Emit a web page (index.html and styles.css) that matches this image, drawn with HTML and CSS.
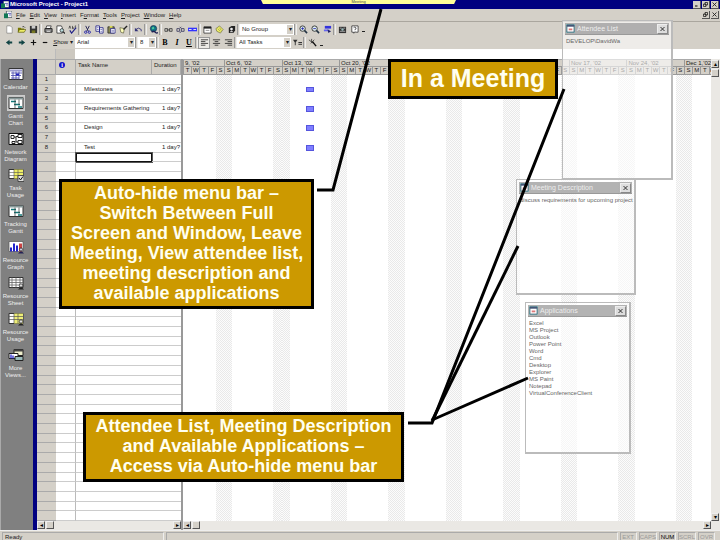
FILE: index.html
```
<!DOCTYPE html>
<html lang="en">
<head>
  <meta charset="UTF-8">
  <meta name="viewport" content="width=device-width, initial-scale=1.0">
  <title>Microsoft Project - Project1</title>
  <link rel="stylesheet" href="styles.css">
</head>
<body>
  <svg class="defs" aria-hidden="true">
    <symbol id="i-new" viewBox="0 0 10 10"><path d="M2 1h4l2 2v6H2z" fill="#fff" stroke="#555" stroke-width=".5"/></symbol>
    <symbol id="i-open" viewBox="0 0 10 10"><path d="M1 3h3l1 1h3v4H1z" fill="#770"/><path d="M1 8l2-3h7L8 8z" fill="#ee6" stroke="#440" stroke-width=".6"/><path d="M6 2q2-1 3 1" fill="none" stroke="#222" stroke-width=".8"/></symbol>
    <symbol id="i-save" viewBox="0 0 10 10"><path d="M1 1h8v8H1z" fill="#333"/><path d="M3 1h4v3H3z" fill="#ccc"/><path d="M3 6h4v3H3z" fill="#772"/></symbol>
    <symbol id="i-print" viewBox="0 0 10 10"><path d="M3 1h5L7 4H2z" fill="#fff" stroke="#222" stroke-width=".8"/><path d="M1 4h8v4H1z" fill="#888" stroke="#111" stroke-width=".9"/><path d="M3 7h4" stroke="#eee"/></symbol>
    <symbol id="i-preview" viewBox="0 0 10 10"><path d="M1 1h5l1 2v6H1z" fill="#fff" stroke="#222" stroke-width=".8"/><circle cx="6.500" cy="6" r="2" fill="#bdd" stroke="#222" stroke-width=".8"/><path d="M8 7.500l2 2" stroke="#222" stroke-width="1.200"/></symbol>
    <symbol id="i-spell" viewBox="0 0 10 10"><path d="M1 4l1-3 1 3M5 1v3h1V3H5M9 1H8v3h1" fill="none" stroke="#222" stroke-width=".7"/><path d="M2 6l2 3 5-6" fill="none" stroke="#228" stroke-width="1.300"/></symbol>
    <symbol id="i-cut" viewBox="0 0 10 10"><path d="M3 1l3 6M7 1L4 7" stroke="#225" stroke-width="1"/><circle cx="3" cy="8" r="1.300" fill="none" stroke="#22a"/><circle cx="7" cy="8" r="1.300" fill="none" stroke="#22a"/></symbol>
    <symbol id="i-copy" viewBox="0 0 10 10"><path d="M1 1h4v6H1zM5 3h4v6H5z" fill="#fff" stroke="#228" stroke-width=".9"/><path d="M2 3h2M2 5h2M6 5h2M6 7h2" stroke="#228" stroke-width=".6"/></symbol>
    <symbol id="i-paste" viewBox="0 0 10 10"><path d="M1 2h7v7H1z" fill="#885" stroke="#222" stroke-width=".8"/><path d="M3 1h3v2H3z" fill="#dd5"/><path d="M4 4h5v5H4z" fill="#fff" stroke="#228" stroke-width=".8"/><path d="M5 6h3M5 7.500h3" stroke="#228" stroke-width=".5"/></symbol>
    <symbol id="i-painter" viewBox="0 0 10 10"><path d="M1 3l5 1-1 5-3-1z" fill="#ffb" stroke="#553" stroke-width=".7"/><path d="M5 5l4-4" stroke="#222" stroke-width="1.500"/></symbol>
    <symbol id="i-undo" viewBox="0 0 10 10"><path d="M2 5q3-3 6 0v2" fill="none" stroke="#337" stroke-width="1"/><path d="M1 3v4h4z" fill="#337"/></symbol>
    <symbol id="i-globe" viewBox="0 0 10 10"><circle cx="5" cy="4" r="3.500" fill="#178" stroke="#124" stroke-width=".7"/><path d="M3 3l2-1 1 2-2 1z" fill="#5c9"/><path d="M3 8q2-2 4 0t3 0" fill="none" stroke="#225" stroke-width="1.500"/></symbol>
    <symbol id="i-link" viewBox="0 0 10 10"><path d="M1 4h3v3H1zM6 4h3v3H6zM3 5.500h4" fill="none" stroke="#444" stroke-width="1"/></symbol>
    <symbol id="i-unlink" viewBox="0 0 10 10"><path d="M1 4h3v3H1zM6 4h3v3H6zM4 2l2 2M6 7l-2 2M6 2L5 3" fill="none" stroke="#446" stroke-width="1"/></symbol>
    <symbol id="i-split" viewBox="0 0 10 10"><path d="M0 3h10v4H0z" fill="#33f"/><path d="M1 5h3M6 5h3" stroke="#dde" stroke-width="1.200"/></symbol>
    <symbol id="i-info" viewBox="0 0 10 10"><path d="M1 2h8v7H1z" fill="#fff" stroke="#222" stroke-width=".8"/><path d="M1 2h8v2H1z" fill="#222"/><path d="M3 6h4" stroke="#777" stroke-width=".8"/></symbol>
    <symbol id="i-note" viewBox="0 0 10 10"><path d="M1 4l4-3 4 4-3 4-4-2z" fill="#ee6" stroke="#553" stroke-width=".6"/><path d="M3 4l3 3M5 3l2 3" stroke="#774" stroke-width=".6"/></symbol>
    <symbol id="i-assign" viewBox="0 0 10 10"><path d="M2 3l3-2h4v5L7 9H2z" fill="#222"/><circle cx="5" cy="4.500" r="1.500" fill="#eee"/><path d="M3 8q2-3 4 0z" fill="#ccc"/></symbol>
    <symbol id="i-zoomin" viewBox="0 0 10 10"><circle cx="4" cy="4" r="3" fill="#dee" stroke="#222" stroke-width=".9"/><path d="M2.500 4h3M4 2.500v3" stroke="#22a" stroke-width=".9"/><path d="M6 6l3 3" stroke="#234" stroke-width="1.700"/></symbol>
    <symbol id="i-zoomout" viewBox="0 0 10 10"><circle cx="4" cy="4" r="3" fill="#dee" stroke="#222" stroke-width=".9"/><path d="M2.500 4h3" stroke="#22a" stroke-width=".9"/><path d="M6 6l3 3" stroke="#234" stroke-width="1.700"/></symbol>
    <symbol id="i-goto" viewBox="0 0 10 10"><path d="M2 1h7v3H2z" fill="#33d"/><path d="M1 5h6v2H1z" fill="#66e"/><path d="M5 5l4 2-3 2z" fill="#226"/></symbol>
    <symbol id="i-camera" viewBox="0 0 10 10"><path d="M1 2h8v7H1z" fill="#333"/><path d="M2 3.500h2M6 3.500h2M2 7h6" stroke="#ccc" stroke-width=".8"/><circle cx="5" cy="5" r="1.300" fill="#9bb"/></symbol>
    <symbol id="i-help" viewBox="0 0 10 10"><path d="M2 1h7v7H6L4 9V8H2z" fill="#fff" stroke="#222" stroke-width=".8"/><path d="M4 3q1.500-1.500 2.500 0T5.500 5v.6M5.500 6.500v.8" fill="none" stroke="#222" stroke-width=".8"/></symbol>
    <symbol id="i-left" viewBox="0 0 10 10"><path d="M1 5l4-3v2h3v2H5v2z" fill="#144"/></symbol>
    <symbol id="i-right" viewBox="0 0 10 10"><path d="M9 5L5 2v2H2v2h3v2z" fill="#144"/></symbol>
    <symbol id="i-plus" viewBox="0 0 10 10"><path d="M2 5h6M5 2v6" stroke="#111" stroke-width="1.300"/></symbol>
    <symbol id="i-minus" viewBox="0 0 10 10"><path d="M2 5h5" stroke="#111" stroke-width="1.300"/></symbol>
    <symbol id="i-al" viewBox="0 0 10 10"><path d="M1 2h8M1 4h5M1 6h8M1 8h5" stroke="#222" stroke-width=".9"/></symbol>
    <symbol id="i-ac" viewBox="0 0 10 10"><path d="M1 2h8M3 4h4M1 6h8M3 8h4" stroke="#222" stroke-width=".9"/></symbol>
    <symbol id="i-ar" viewBox="0 0 10 10"><path d="M1 2h8M4 4h5M1 6h8M4 8h5" stroke="#222" stroke-width=".9"/></symbol>
    <symbol id="i-filter" viewBox="0 0 10 10"><path d="M0 2h5L3 5v3H2V5z" fill="#333"/><path d="M6 5h4M6 7h4" stroke="#222"/></symbol>
    <symbol id="i-wizard" viewBox="0 0 10 10"><path d="M1 2l5 4M4 1v4M7 2L3 6" stroke="#333" stroke-width=".9"/><path d="M5 4l4 5" stroke="#111" stroke-width="1.600"/></symbol>
    <symbol id="i-app" viewBox="0 0 10 10"><path d="M3 0h7v8H3z" fill="#fff" stroke="#234" stroke-width=".8"/><path d="M0 3h5v6H0z" fill="#175"/><path d="M5 3h4M6 5h3" stroke="#44a"/></symbol>
    <symbol id="i-form" viewBox="0 0 10 10"><path d="M0 0h10v10H0z" fill="#8bb"/><path d="M1 1h8v8H1z" fill="#fff" stroke="#467" stroke-width="1"/><path d="M1 1h8v2H1z" fill="#457"/><path d="M3 5h4v2H3z" fill="#d77"/></symbol>
    <symbol id="i-x" viewBox="0 0 10 10"><path d="M1 1l8 8M9 1L1 9" stroke="#222" stroke-width="1.800"/></symbol>
    <symbol id="i-min" viewBox="0 0 10 10"><path d="M2 8h5" stroke="#000" stroke-width="2"/></symbol>
    <symbol id="i-restore" viewBox="0 0 10 10"><path d="M4 1h5v5H4zM1 4h5v5H1z" fill="#d4d0c8" stroke="#000" stroke-width="1.300"/></symbol>

    <symbol id="v-calendar" viewBox="0 0 16 13"><path d="M1 1h14v11H1z" fill="#fff" stroke="#333"/><path d="M2 2h12v2H2z" fill="#99c"/><path d="M3 5.500h11M3 8h10M3 10.500h8M5 4v8M8 4v8M11 4v8" stroke="#44a" stroke-width=".8"/><path d="M8 6h3v2H8z" fill="#22b"/></symbol>
    <symbol id="v-gantt" viewBox="0 0 16 13"><path d="M1 1h14v11H1z" fill="#fff" stroke="#333"/><path d="M1 1h14v2H1z" fill="#899"/><path d="M3 5h5M6 8h6M10 10.500h4" stroke="#177" stroke-width="1.500"/><path d="M7 3v9M11 3v6" stroke="#333" stroke-width=".7"/></symbol>
    <symbol id="v-network" viewBox="0 0 16 13"><path d="M1 1h14v11H1z" fill="#fff" stroke="#111"/><path d="M3 3h3v3H3zM10 2h4v3h-4zM10 8h4v3h-4zM4 9h3v2H4z" fill="#fff" stroke="#111" stroke-width=".9"/><path d="M6 4.500h2v5M8 4h2M8 9.500h2" fill="none" stroke="#111" stroke-width=".9"/></symbol>
    <symbol id="v-task" viewBox="0 0 16 13"><path d="M1 1h14v9H1z" fill="#fff" stroke="#333"/><path d="M6 1h9v9H6z" fill="#ee6"/><path d="M1 4h14M1 7h14M6 1v9M10 1v9" stroke="#555" stroke-width=".6"/><path d="M10 7h6v6h-6z" fill="#ddd" stroke="#333" stroke-width=".8"/><path d="M11 9.500l1.500 2L15 8" fill="none" stroke="#111"/></symbol>
    <symbol id="v-graph" viewBox="0 0 16 13"><path d="M1 1h14v10H1z" fill="#fff" stroke="#555" stroke-width=".7"/><path d="M2 7h2v4H2zM5 3h2v8H5zM8 5h2v6H8z" fill="#22c"/><path d="M11 3h3v8h-3z" fill="#c44"/><circle cx="13" cy="9" r="1.600" fill="#ccd" stroke="#222" stroke-width=".7"/><path d="M10 13q3-4 6 0z" fill="#225"/></symbol>
    <symbol id="v-sheet" viewBox="0 0 16 13"><path d="M1 1h14v10H1z" fill="#fff" stroke="#333"/><path d="M1 3.500h14M1 6h14M1 8.500h14M4 1v10M8 1v10M12 1v10" stroke="#666" stroke-width=".8"/><circle cx="13" cy="9" r="1.700" fill="#ddd" stroke="#222" stroke-width=".7"/><path d="M10 13q3-4 6 0z" fill="#222"/></symbol>
    <symbol id="v-usage" viewBox="0 0 16 13"><path d="M1 1h14v10H1z" fill="#fff" stroke="#333"/><path d="M6 1h9v10H6z" fill="#ee7"/><path d="M1 4h14M1 7h14M6 1v10M10 1v10" stroke="#555" stroke-width=".7"/><circle cx="13" cy="9" r="1.700" fill="#ddd" stroke="#222" stroke-width=".7"/><path d="M10 13q3-4 6 0z" fill="#222"/></symbol>
    <symbol id="v-more" viewBox="0 0 16 13"><path d="M6 1h9v6H6z" fill="#eec" stroke="#222"/><path d="M1 5h9v5H1z" fill="#fff" stroke="#222"/><path d="M3 6v4M5 7v3" stroke="#22c" stroke-width="1.300"/><path d="M7 8h8v4H7z" fill="#9bb" stroke="#222"/><path d="M6 1h9v2H6z" fill="#444"/></symbol>
  </svg>

  <div class="app">
    <header class="titlebar">
      <svg class="icon"><use href="#i-app"/></svg>
      <h1>Microsoft Project - Project1</h1>
      <div class="win-buttons">
        <button aria-label="Minimize"><svg><use href="#i-min"/></svg></button>
        <button aria-label="Restore"><svg><use href="#i-restore"/></svg></button>
        <button aria-label="Close"><svg><use href="#i-x"/></svg></button>
      </div>
    </header>

    <nav class="menubar">
      <svg class="icon"><use href="#i-app"/></svg>
      <button><u>F</u>ile</button>
      <button><u>E</u>dit</button>
      <button><u>V</u>iew</button>
      <button><u>I</u>nsert</button>
      <button>F<u>o</u>rmat</button>
      <button><u>T</u>ools</button>
      <button><u>P</u>roject</button>
      <button><u>W</u>indow</button>
      <button><u>H</u>elp</button>
      <div class="win-buttons">
        <button aria-label="Restore project"><svg><use href="#i-restore"/></svg></button>
        <button aria-label="Close project"><svg><use href="#i-x"/></svg></button>
      </div>
    </nav>

    <div class="toolbar">
      <button class="tool" aria-label="New"><svg><use href="#i-new"/></svg></button>
      <button class="tool" aria-label="Open"><svg><use href="#i-open"/></svg></button>
      <button class="tool" aria-label="Save"><svg><use href="#i-save"/></svg></button>
      <i class="sep"></i>
      <button class="tool" aria-label="Print"><svg><use href="#i-print"/></svg></button>
      <button class="tool" aria-label="Print preview"><svg><use href="#i-preview"/></svg></button>
      <button class="tool" aria-label="Spelling"><svg><use href="#i-spell"/></svg></button>
      <i class="sep"></i>
      <button class="tool" aria-label="Cut"><svg><use href="#i-cut"/></svg></button>
      <button class="tool" aria-label="Copy"><svg><use href="#i-copy"/></svg></button>
      <button class="tool" aria-label="Paste"><svg><use href="#i-paste"/></svg></button>
      <button class="tool" aria-label="Format painter"><svg><use href="#i-painter"/></svg></button>
      <i class="sep"></i>
      <button class="tool" aria-label="Undo"><svg><use href="#i-undo"/></svg></button>
      <i class="sep"></i>
      <button class="tool" aria-label="Insert hyperlink"><svg><use href="#i-globe"/></svg></button>
      <i class="sep"></i>
      <button class="tool" aria-label="Link tasks"><svg><use href="#i-link"/></svg></button>
      <button class="tool" aria-label="Unlink tasks"><svg><use href="#i-unlink"/></svg></button>
      <button class="tool" aria-label="Split task"><svg><use href="#i-split"/></svg></button>
      <i class="sep"></i>
      <button class="tool" aria-label="Task information"><svg><use href="#i-info"/></svg></button>
      <button class="tool" aria-label="Task notes"><svg><use href="#i-note"/></svg></button>
      <button class="tool" aria-label="Assign resources"><svg><use href="#i-assign"/></svg></button>
      <i class="sep"></i>
      <div class="combo combo-group"><select aria-label="Group by"><option>No Group</option></select></div>
      <i class="sep"></i>
      <button class="tool" aria-label="Zoom in"><svg><use href="#i-zoomin"/></svg></button>
      <button class="tool" aria-label="Zoom out"><svg><use href="#i-zoomout"/></svg></button>
      <button class="tool" aria-label="Go to selected task"><svg><use href="#i-goto"/></svg></button>
      <i class="sep"></i>
      <button class="tool" aria-label="Copy picture"><svg><use href="#i-camera"/></svg></button>
      <button class="tool" aria-label="Help"><svg><use href="#i-help"/></svg></button>
      <button class="more" aria-label="More standard buttons"></button>
    </div>

    <div class="toolbar">
      <button class="tool" aria-label="Outdent"><svg><use href="#i-left"/></svg></button>
      <button class="tool" aria-label="Indent"><svg><use href="#i-right"/></svg></button>
      <button class="tool" aria-label="Show subtasks"><svg><use href="#i-plus"/></svg></button>
      <button class="tool" aria-label="Hide subtasks"><svg><use href="#i-minus"/></svg></button>
      <button class="show"><u>S</u>how <span>▾</span></button>
      <div class="combo combo-font"><select aria-label="Font"><option>Arial</option></select></div>
      <i class="sep"></i>
      <div class="combo combo-size"><select aria-label="Font size"><option>8</option></select></div>
      <i class="sep"></i>
      <button class="tool" aria-label="Bold"><b>B</b></button>
      <button class="tool" aria-label="Italic"><b><em>I</em></b></button>
      <button class="tool" aria-label="Underline"><b><u>U</u></b></button>
      <i class="sep"></i>
      <button class="tool pressed" aria-label="Align left"><svg><use href="#i-al"/></svg></button>
      <button class="tool" aria-label="Center"><svg><use href="#i-ac"/></svg></button>
      <button class="tool" aria-label="Align right"><svg><use href="#i-ar"/></svg></button>
      <i class="sep"></i>
      <div class="combo combo-group"><select aria-label="Filter"><option>All Tasks</option></select></div>
      <button class="tool" aria-label="AutoFilter"><svg><use href="#i-filter"/></svg></button>
      <i class="sep"></i>
      <button class="tool" aria-label="Gantt chart wizard"><svg><use href="#i-wizard"/></svg></button>
      <button class="more" aria-label="More formatting buttons"></button>
    </div>

    <div class="entry">
      <span class="entry-left"></span>
      <span class="entry-buttons"></span>
      <input type="text" aria-label="Entry">
    </div>

    <main class="workspace">
      <nav class="viewbar">
        <button><svg><use href="#v-calendar"/></svg>Calendar</button>
        <button class="current"><svg><use href="#v-gantt"/></svg>Gantt<br>Chart</button>
        <button><svg><use href="#v-network"/></svg>Network<br>Diagram</button>
        <button><svg><use href="#v-task"/></svg>Task<br>Usage</button>
        <button><svg><use href="#v-gantt"/></svg>Tracking<br>Gantt</button>
        <button><svg><use href="#v-graph"/></svg>Resource<br>Graph</button>
        <button><svg><use href="#v-sheet"/></svg>Resource<br>Sheet</button>
        <button><svg><use href="#v-usage"/></svg>Resource<br>Usage</button>
        <button><svg><use href="#v-more"/></svg>More<br>Views...</button>
      </nav>

      <section class="sheet">
        <table>
          <thead>
            <tr><th></th><th><span class="info">i</span></th><th>Task Name</th><th>Duration</th></tr>
          </thead>
          <tbody id="rows"></tbody>
        </table>
        <div class="hscroll">
          <button class="arrow" aria-label="Scroll sheet left">◂</button>
          <span class="thumb"></span>
          <button class="arrow end" aria-label="Scroll sheet right">▸</button>
        </div>
      </section>

      <section class="chart">
        <div class="scale" id="scale"></div>
        <div class="weeks" id="weeks"></div>
        <div class="hscroll">
          <button class="arrow" aria-label="Scroll chart left">◂</button>
          <span class="thumb"></span>
          <button class="arrow end" aria-label="Scroll chart right">▸</button>
        </div>
      </section>

      <div class="vscroll">
        <button class="arrow" aria-label="Scroll up">▴</button>
        <span class="thumb"></span>
        <button class="arrow end" aria-label="Scroll down">▾</button>
      </div>
    </main>

    <footer class="status">
      <span class="ready">Ready</span>
      <span class="fill"></span>
      <span class="key">EXT</span>
      <span class="key">CAPS</span>
      <span class="key on">NUM</span>
      <span class="key">SCRL</span>
      <span class="key">OVR</span>
    </footer>

    <div class="autohide"><button>Meeting</button></div>

    <section class="popup attendees">
      <h2><svg><use href="#i-form"/></svg>Attendee List<button aria-label="Close attendee list"><svg><use href="#i-x"/></svg></button></h2>
      <ul>
        <li>DEVELOP\DavidWa</li>
      </ul>
    </section>

    <section class="popup description">
      <h2><svg><use href="#i-form"/></svg>Meeting Description<button aria-label="Close description"><svg><use href="#i-x"/></svg></button></h2>
      <p>discuss requirements for upcoming project</p>
    </section>

    <section class="popup applications">
      <h2><svg><use href="#i-form"/></svg>Applications<button aria-label="Close applications"><svg><use href="#i-x"/></svg></button></h2>
      <ul>
        <li>Excel</li>
        <li>MS Project</li>
        <li>Outlook</li>
        <li>Power Point</li>
        <li>Word</li>
        <li>Cmd</li>
        <li>Desktop</li>
        <li>Explorer</li>
        <li>MS Paint</li>
        <li>Notepad</li>
        <li>VirtualConferenceClient</li>
      </ul>
    </section>

    <svg class="pointers" width="720" height="540" viewBox="0 0 720 540" aria-hidden="true">
      <path d="M381 9L333 190H317"/>
      <path d="M564 89L432 423H408"/>
      <path d="M518 246L432 421"/>
      <path d="M528 378L432 420"/>
    </svg>

    <div class="callout callout-title">In a Meeting</div>
    <div class="callout callout-menu">Auto-hide menu bar –<br>Switch Between Full<br>Screen and Window, Leave<br>Meeting, View attendee list,<br>meeting description and<br>available applications</div>
    <div class="callout callout-lists">Attendee List, Meeting Description<br>and Available Applications –<br>Access via Auto-hide menu bar</div>
  </div>

  <script>
    var ROWS = 46;
    var tasks = { 2: 'Milestones', 4: 'Requirements Gathering', 6: 'Design', 8: 'Test' };
    var labels = ["9, '02", "Oct 6, '02", "Oct 13, '02", "Oct 20, '02", "Oct 27, '02", "Nov 3, '02", "Nov 10, '02", "Nov 17, '02", "Nov 24, '02", "Dec 1,'02"];
    var letters = ['S', 'M', 'T', 'W', 'T', 'F', 'S'];

    // task sheet
    var html = '';
    for (var i = 1; i <= ROWS; i++) {
      html += '<tr' + (i == 9 ? ' class="selected"' : '') + '><th>' + (i < 9 ? i : '') + '</th><td></td><td>' +
        (tasks[i] || '') + '</td><td>' + (tasks[i] ? '1 day?' : '') + '</td></tr>';
    }
    document.getElementById('rows').innerHTML = html;

    // time scale and chart, first and last week are cut off
    var scale = '';
    var weeks = '';
    for (var w = 0; w < labels.length; w++) {
      var name = w == 0 ? ' first' : w == labels.length - 1 ? ' last' : '';
      var from = w == 0 ? 2 : 0;
      var to = w == labels.length - 1 ? 4 : 7;
      scale += '<div class="week' + name + '"><span class="label">' + labels[w] + '</span>';
      weeks += '<div class="week' + name + '">';
      for (var d = from; d < to; d++) {
        scale += '<span class="day">' + letters[d] + '</span>';
        weeks += '<span class="col' + (d == 0 || d == 6 ? ' weekend' : '') + '"></span>';
      }
      if (w == 2) {
        for (var t in tasks) weeks += '<span class="bar bar' + t + '"></span>';
      }
      scale += '</div>';
      weeks += '</div>';
    }
    document.getElementById('scale').innerHTML = scale;
    document.getElementById('weeks').innerHTML = weeks;
  </script>
</body>
</html>
```
FILE: styles.css
```
*{
  box-sizing: border-box;
  margin: 0;
  padding: 0;
}
body{
  font: 6px/7px "Liberation Sans", Arial, sans-serif;
  color: #222;
  background: #fff;
}
button,
input,
select{
  font: inherit;
  color: inherit;
  border: 0;
  border-radius: 0;
  background: none;
}
u{
  text-decoration-thickness: 1px;
}
.defs{
  position: absolute;
  width: 0;
  height: 0;
}
.app{
  position: relative;
  display: flex;
  flex-direction: column;
  height: 100vh;
  overflow: hidden;
}

/* title and menu */
.titlebar{
  display: flex;
  align-items: center;
  gap: 1px;
  height: 9px;
  padding: 0 1px;
  color: #fff;
  background: #000080;
}
.titlebar h1{
  font-size: 6px;
  line-height: 7px;
}
.icon{
  width: 8px;
  height: 8px;
}
.win-buttons{
  display: flex;
  gap: 1px;
  margin-left: auto;
}
.win-buttons button{
  display: flex;
  width: 8px;
  height: 8px;
  padding: 1px;
  background: #d4d0c8;
  border-right: 1px solid #555;
  border-bottom: 1px solid #555;
}
.win-buttons svg{
  width: 100%;
  height: 100%;
}
.menubar{
  display: flex;
  align-items: center;
  gap: 4px;
  height: 13px;
  padding: 0 1px 0 4px;
  background: #d4d0c8;
  border-bottom: 1px solid #aaa69e;
}

/* toolbars */
.toolbar{
  display: flex;
  align-items: center;
  height: 14px;
  padding-left: 3px;
  background: #d4d0c8;
}
.toolbar + .toolbar{
  height: 13px;
}
.tool{
  display: flex;
  align-items: center;
  justify-content: center;
  width: 12px;
  height: 12px;
  font: 8px/10px "Liberation Serif", serif;
  color: #000;
}
.tool svg{
  width: 9px;
  height: 9px;
}
.pressed{
  background: #eceae6;
  border: 1px solid #999;
}
.sep{
  width: 3px;
  height: 11px;
  border-left: 1px solid #999;
  border-right: 1px solid #eee;
}
.more{
  width: 3px;
  height: 1px;
  margin: 5px 2px 0;
  background: #222;
}
.show{
  width: 24px;
}
.combo{
  position: relative;
  height: 11px;
  background: #fff;
}
.combo select{
  display: block;
  width: 100%;
  height: 11px;
  padding: 0 2px;
  appearance: none;
}
.combo::after{
  content: '▾';
  position: absolute;
  top: 1px;
  right: 1px;
  width: 6px;
  height: 9px;
  line-height: 9px;
  text-align: center;
  background: #d4d0c8;
  pointer-events: none;
}
.combo-group{
  width: 54px;
}
.combo-font{
  width: 60px;
}
.combo-size{
  width: 18px;
}

/* entry bar */
.entry{
  display: flex;
  height: 10px;
}
.entry-left{
  width: 55px;
  background: #d4d0c8;
}
.entry-buttons{
  width: 20px;
  background: #ccc8c0;
  border-left: 1px solid #bbb;
}
.entry input{
  flex: 1;
}

/* workspace */
.workspace{
  flex: 1;
  display: flex;
  min-height: 0;
}
.viewbar{
  display: flex;
  flex-direction: column;
  gap: 5px;
  width: 37px;
  padding-top: 8px;
  background: #808080;
  border-left: 1px solid #aaa;
  border-right: 4px solid #000080;
}
.viewbar button{
  padding-right: 3px;
  line-height: 7px;
  color: #eee;
}
.viewbar svg{
  display: block;
  width: 16px;
  height: 14px;
  margin: 0 auto 3px;
}
.viewbar .current svg{
  outline: 1px solid #ccc;
  background: #c4c4c4;
}
.sheet{
  display: flex;
  flex-direction: column;
  width: 146px;
  border-right: 2px solid #999;
}
.sheet table{
  flex: 1;
  display: flex;
  flex-direction: column;
  min-height: 0;
}
.sheet tr{
  display: grid;
  grid-template-columns: 19px 20px 76px 1fr;
  min-height: 0;
}
.sheet thead tr{
  height: 16px;
  background: #d4d0c8;
  border-top: 1px solid #aaa;
}
.sheet thead th{
  padding: 2px 0 0 2px;
  font-weight: normal;
  text-align: left;
  border-right: 1px solid #aaa;
  border-bottom: 1px solid #aaa;
}
.sheet thead .info{
  display: block;
  width: 6px;
  height: 6px;
  margin-left: 1px;
  font: bold 6px/6px "Liberation Serif", serif;
  text-align: center;
  color: #fff;
  background: #1111cc;
  border-radius: 3px;
}
.sheet tbody{
  flex: 1;
  display: grid;
  grid-auto-rows: 1fr;
  min-height: 0;
}
.sheet tbody th,
.sheet tbody td{
  min-height: 0;
  line-height: 9px;
  border-bottom: 1px solid #ccc;
}
.sheet tbody th{
  font-weight: normal;
  text-align: center;
  background: #d4d0c8;
  border-bottom-color: #aaa;
}
.sheet td:nth-child(2){
  border-right: 1px solid #bbb;
}
.sheet td:nth-child(3){
  padding-left: 8px;
  white-space: nowrap;
}
.sheet td:nth-child(4){
  padding-right: 1px;
  text-align: right;
}
.sheet .selected td:nth-child(3){
  border: 1px solid #111;
  outline: 1px solid #555;
}

/* gantt chart */
.chart{
  flex: 1;
  display: flex;
  flex-direction: column;
  min-width: 0;
}
.scale,
.weeks{
  display: grid;
  grid-template-columns: 50fr repeat(8, 70fr) 33fr;
}
.scale{
  height: 16px;
  background: #d4d0c8;
  border-top: 1px solid #aaa;
}
.weeks{
  flex: 1;
  min-height: 0;
}
.week{
  display: grid;
  grid-template-columns: repeat(7, 1fr);
  min-width: 0;
}
.first{
  grid-template-columns: repeat(5, 1fr);
}
.last{
  grid-template-columns: 10fr 10fr 10fr 3fr;
}
.scale .week{
  grid-template-rows: 7px 8px;
}
.label{
  grid-column: 1 / -1;
  padding-left: 1px;
  white-space: nowrap;
  border-left: 1px solid #999;
  border-bottom: 1px solid #999;
}
.day{
  min-width: 0;
  overflow: hidden;
  text-align: center;
  border-left: 1px solid #999;
  border-bottom: 1px solid #999;
}
.weeks .week{
  grid-template-rows: repeat(46, 1fr);
}
.col{
  grid-row: 1 / -1;
}
.weekend{
  background: repeating-conic-gradient(#e9e9e9 0 25%, #fcfcfc 0 50%) 0 0 / 2px 2px;
}
.bar{
  grid-column: 4;
  margin: 2px 0 2px;
  background: #7f7fff;
  border: 1px solid #5555dd;
}
.bar2{ grid-row: 2; }
.bar4{ grid-row: 4; }
.bar6{ grid-row: 6; }
.bar8{ grid-row: 8; }
.week .col:nth-child(1){ grid-column: 1; }
.week .col:nth-child(2){ grid-column: 2; }
.week .col:nth-child(3){ grid-column: 3; }
.week .col:nth-child(4){ grid-column: 4; }
.week .col:nth-child(5){ grid-column: 5; }
.week .col:nth-child(6){ grid-column: 6; }
.week .col:nth-child(7){ grid-column: 7; }

/* scroll bars */
.hscroll,
.vscroll{
  display: flex;
  gap: 1px;
  background: #eae8e4;
}
.hscroll{
  height: 9px;
}
.vscroll{
  flex-direction: column;
  width: 9px;
  padding: 1px 0 9px;
}
.arrow,
.thumb{
  width: 8px;
  height: 8px;
  line-height: 6px;
  text-align: center;
  color: #000;
  background: #d4d0c8;
  border: 1px solid #eee;
  border-right-color: #555;
  border-bottom-color: #555;
}
.hscroll .end{
  margin-left: auto;
}
.vscroll .end{
  margin-top: auto;
}

/* status bar */
.status{
  display: flex;
  gap: 2px;
  height: 10px;
  padding: 1px 5px 0 2px;
  background: #d4d0c8;
  border-top: 1px solid #eee;
}
.status span{
  padding: 0 2px;
  line-height: 8px;
  border: 1px solid #aaa;
  border-right-color: #eee;
  border-bottom: 0;
}
.ready{
  width: 162px;
}
.fill{
  flex: 1;
}
.status .key{
  min-width: 17px;
  padding: 0;
  text-align: center;
  color: #999;
}
.status .on{
  color: #000;
}

/* meeting windows */
.autohide{
  position: absolute;
  top: 0;
  left: 261px;
  width: 195px;
  height: 4px;
  overflow: hidden;
  text-align: center;
  background: #ffff99;
  clip-path: polygon(0 0, 100% 0, 99% 100%, 1% 100%);
}
.autohide button{
  display: block;
  margin: 0 auto;
  font-size: 4px;
  line-height: 3px;
  color: #444;
}
.popup{
  position: absolute;
  padding: 2px;
  color: #666;
  background: rgba(255, 255, 255, 0.6);
  border: 1px solid #bbb;
  border-right: 2px solid #bbb;
  border-bottom: 2px solid #bbb;
}
.popup h2{
  display: flex;
  align-items: center;
  gap: 2px;
  height: 12px;
  margin-bottom: 1px;
  padding: 0 1px;
  font-size: 7px;
  line-height: 10px;
  font-weight: normal;
  color: #eee;
  background: rgba(160, 160, 160, 0.8);
  border-bottom: 1px solid #999;
}
.popup h2 > svg{
  width: 9px;
  height: 9px;
}
.popup h2 button{
  display: flex;
  width: 11px;
  height: 10px;
  margin-left: auto;
  padding: 1px 2px;
  background: #ddd;
  border: 1px solid #eee;
  border-right-color: #888;
  border-bottom-color: #888;
}
.popup h2 button svg{
  width: 100%;
  height: 100%;
}
.popup ul,
.popup p{
  padding: 2px 1px;
  list-style: none;
  white-space: nowrap;
}
.attendees{
  top: 20px;
  left: 562px;
  width: 111px;
  height: 160px;
}
.description{
  top: 179px;
  left: 516px;
  width: 120px;
  height: 116px;
}
.applications{
  top: 302px;
  left: 525px;
  width: 106px;
  height: 152px;
}

/* callouts */
.pointers{
  position: absolute;
  top: 0;
  left: 0;
  fill: none;
  stroke: #000;
  stroke-width: 3;
}
.callout{
  position: absolute;
  padding: 1px 0 3px;
  font-size: 18px;
  line-height: 20px;
  font-weight: bold;
  text-align: center;
  white-space: nowrap;
  color: #fffff0;
  background: #cc9900;
  border: 3px solid #000;
}
.callout-title{
  top: 59px;
  left: 388px;
  width: 170px;
  font-size: 25px;
  line-height: 30px;
}
.callout-menu{
  top: 179px;
  left: 59px;
  width: 255px;
}
.callout-lists{
  top: 412px;
  left: 83px;
  width: 321px;
}
```
